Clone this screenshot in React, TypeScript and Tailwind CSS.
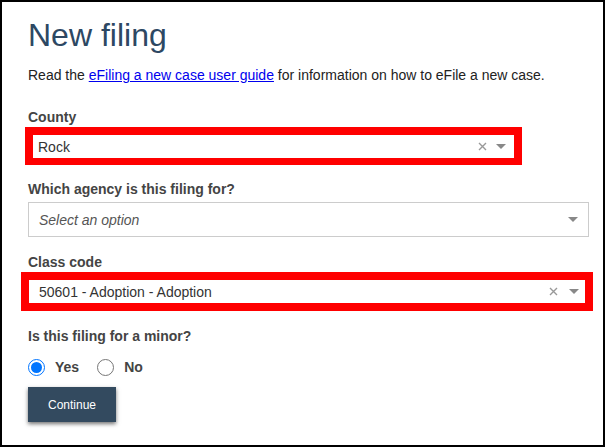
import React from "react";

const Arrow = () => (
  <svg width="10" height="6" viewBox="0 0 10 6" className="shrink-0">
    <path d="M0 0 L10 0 L5 5 Z" fill="#888" />
  </svg>
);

const Clear = () => (
  <svg width="9" height="9" viewBox="0 0 9 9" className="shrink-0">
    <path d="M1 1 L8 8 M8 1 L1 8" stroke="#999" strokeWidth="1.4" />
  </svg>
);

export default function App() {
  return (
    <div
      className="w-[605px] h-[447px] border-2 border-black bg-white overflow-hidden text-[14px] leading-[20px]"
      style={{ fontFamily: '"Liberation Sans", Arial, sans-serif' }}
    >
      <div className="flex flex-col pl-[26px]">
        <h1 className="mt-[13px] text-[32px] leading-[40px] font-normal text-[#2d4863]">New filing</h1>
        <p className="mt-[10px] text-[#222]">
          Read the{" "}
          <a href="#" className="text-[#0000ee] underline">
            eFiling a new case user guide
          </a>{" "}
          for information on how to eFile a new case.
        </p>

        <label className="mt-[22px] font-bold text-[#444]">County</label>
        <div className="-ml-[3px] w-[497px] border-8 border-[#ff0000] border-b-[7px] bg-white">
          <div className="h-[23px] flex items-center pl-[5px] pr-[8px] text-[#333]">
            <span className="flex-1">Rock</span>
            <Clear />
            <span className="w-[9px]" />
            <Arrow />
          </div>
        </div>

        <label className="mt-[14px] font-bold text-[#444]">Which agency is this filing for?</label>
        <div className="mt-[3px] w-[561px] h-[35px] border border-[#cccccc] flex items-center pl-[10px] pr-[10px]">
          <span className="flex-1 italic text-[#555]">Select an option</span>
          <Arrow />
        </div>

        <label className="mt-[15px] font-bold text-[#444]">Class code</label>
        <div className="-ml-[7px] w-[572px] border-8 border-[#ff0000] bg-white">
          <div className="h-[23px] flex items-center pl-[10px] pr-[6px] text-[#333]">
            <span className="flex-1">50601 - Adoption - Adoption</span>
            <Clear />
            <span className="w-[11px]" />
            <Arrow />
          </div>
        </div>

        <label className="mt-[15px] font-bold text-[#444]">Is this filing for a minor?</label>

        <div className="mt-[11px] flex items-center h-[20px] font-bold text-[#444]">
          <span className="w-[17px] h-[17px] rounded-full border border-[#0075ff] flex items-center justify-center">
            <span className="w-[11px] h-[11px] rounded-full bg-[#0075ff]" />
          </span>
          <span className="ml-[10px]">Yes</span>
          <span className="ml-[18px] w-[17px] h-[17px] rounded-full border border-[#767676] bg-white" />
          <span className="ml-[10px]">No</span>
        </div>

        <button className="mt-[10px] w-[88px] h-[35px] bg-[#334a5f] text-white text-[12px] shadow-[0_2px_4px_rgba(0,0,0,0.55)] flex items-center justify-center">
          Continue
        </button>
      </div>
    </div>
  );
}
